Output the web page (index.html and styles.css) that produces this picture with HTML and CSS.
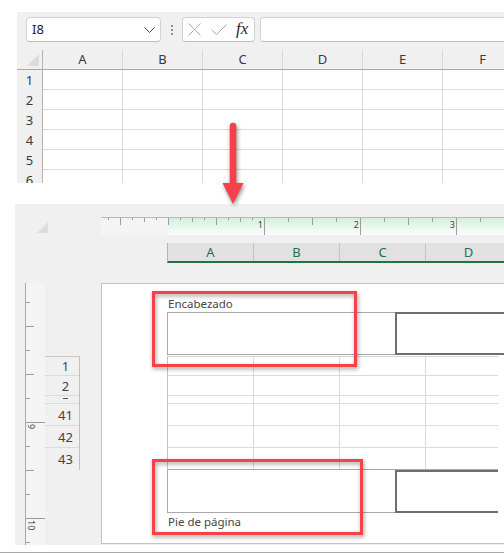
FILE: index.html
```html
<!DOCTYPE html>
<html>
<head>
<meta charset="utf-8">
<link rel="stylesheet" href="styles.css">
</head>
<body>
<div class="top">
  <div class="toolbar">
    <div class="namebox"><span class="nb-text">I8</span><svg class="chev" width="11" height="6" viewBox="0 0 11 6"><path d="M0.5 0.5 L5.5 5.5 L10.5 0.5" stroke="#444" stroke-width="1" fill="none"/></svg></div>
    <svg class="dots" width="2" height="10" viewBox="0 0 2 10"><rect x="0" y="0" width="2" height="2" fill="#8e8e8e"/><rect x="0" y="4" width="2" height="2" fill="#8e8e8e"/><rect x="0" y="8" width="2" height="2" fill="#8e8e8e"/></svg>
    <div class="fxbtns">
      <svg class="ico-x" width="13" height="13" viewBox="0 0 13 13"><path d="M0.5 0.5 L12.5 12.5 M12.5 0.5 L0.5 12.5" stroke="#ababab" stroke-width="1" fill="none"/></svg>
      <svg class="ico-ok" width="16" height="11" viewBox="0 0 16 11"><path d="M0.5 5.5 L5.5 10.5 L15.5 0.5" stroke="#ababab" stroke-width="1" fill="none"/></svg>
      <span class="fx">fx</span>
    </div>
    <div class="formula"></div>
  </div>
  <div class="sheet">
    <div class="srow shead">
      <div class="corner"><div class="tri"></div></div>
      <div class="ch">A</div><div class="ch">B</div><div class="ch">C</div><div class="ch">D</div><div class="ch">E</div><div class="ch">F</div>
    </div>
    <div class="srow"><div class="rh">1</div><div class="c"></div><div class="c"></div><div class="c"></div><div class="c"></div><div class="c"></div><div class="c"></div></div>
    <div class="srow"><div class="rh">2</div><div class="c"></div><div class="c"></div><div class="c"></div><div class="c"></div><div class="c"></div><div class="c"></div></div>
    <div class="srow"><div class="rh">3</div><div class="c"></div><div class="c"></div><div class="c"></div><div class="c"></div><div class="c"></div><div class="c"></div></div>
    <div class="srow"><div class="rh">4</div><div class="c"></div><div class="c"></div><div class="c"></div><div class="c"></div><div class="c"></div><div class="c"></div></div>
    <div class="srow"><div class="rh">5</div><div class="c"></div><div class="c"></div><div class="c"></div><div class="c"></div><div class="c"></div><div class="c"></div></div>
    <div class="srow"><div class="rh">6</div><div class="c"></div><div class="c"></div><div class="c"></div><div class="c"></div><div class="c"></div><div class="c"></div></div>
  </div>
</div>

<div class="bottom">
  <div class="ruler-row">
    <div class="tri2"></div>
    <div class="hruler">
      <div class="hneg"></div>
      <div class="inch fine"><span class="rl">1</span></div>
      <div class="inch"><span class="rl">2</span></div>
      <div class="inch"><span class="rl">3</span></div>
      <div class="inch"></div>
    </div>
  </div>
  <div class="colhdr">
    <div class="pch">A</div><div class="pch">B</div><div class="pch">C</div><div class="pch">D</div>
  </div>
  <div class="main">
    <div class="vruler">
      <div class="vseg"></div>
      <div class="vmajor"><span class="vl">9</span></div>
      <div class="vmajor"><span class="vl">10</span></div>
    </div>
    <div class="rowhdrs">
      <div class="prh r19">1</div>
      <div class="prh r20">2</div>
      <div class="prh r8"><span class="dash"></span></div>
      <div class="prh r22">41</div>
      <div class="prh r22">42</div>
      <div class="prh r22 last">43</div>
    </div>
    <div class="page">
      <div class="hf-label top-label">Encabezado</div>
      <div class="hf-row">
        <div class="hf-left"></div>
        <div class="hf-center"></div>
      </div>
      <div class="pgrid">
        <div class="prow r19"><div class="pc"></div><div class="pc"></div><div class="pc"></div><div class="pc lastc"></div></div>
        <div class="prow r20"><div class="pc"></div><div class="pc"></div><div class="pc"></div><div class="pc lastc"></div></div>
        <div class="prow r8"><div class="pc"></div><div class="pc"></div><div class="pc"></div><div class="pc lastc"></div></div>
        <div class="prow r22"><div class="pc"></div><div class="pc"></div><div class="pc"></div><div class="pc lastc"></div></div>
        <div class="prow r22"><div class="pc"></div><div class="pc"></div><div class="pc"></div><div class="pc lastc"></div></div>
        <div class="prow r22"><div class="pc"></div><div class="pc"></div><div class="pc"></div><div class="pc lastc"></div></div>
      </div>
      <div class="hf-row foot">
        <div class="hf-left"></div>
        <div class="hf-center"></div>
      </div>
      <div class="hf-label foot-label">Pie de página</div>
    </div>
  </div>
</div>
<div class="baseline"></div>

<svg class="arrow" width="30" height="92" viewBox="0 0 30 92">
  <line x1="15" y1="8" x2="15" y2="68" stroke="#f4414a" stroke-width="6.5" stroke-linecap="round"/>
  <polygon points="4.5,65 25.5,65 15,86" fill="#f4414a"/>
</svg>
<div class="hl hl1"></div>
<div class="hl hl2"></div>
</body>
</html>
```

FILE: styles.css
```css
html, body {
  margin: 0;
  padding: 0;
}
body {
  width: 504px;
  height: 553px;
  overflow: hidden;
  position: relative;
  background: #ffffff;
  font-family: "Noto Sans", "Open Sans", sans-serif;
  color: #333;
}

/* ---------- top: normal view ---------- */
.top {
  margin: 12px 0 0 17px;
  height: 171px;
  background: #f0f0f0;
  overflow: hidden;
}
.toolbar {
  display: flex;
  align-items: center;
  height: 25px;
  margin-top: 5px;
  padding-left: 9px;
}
.namebox, .fxbtns, .formula {
  box-sizing: border-box;
  height: 25px;
  background: #fff;
  border: 1px solid #d2d2d2;
  border-bottom-color: #bdbdbd;
  border-radius: 4px;
}
.namebox {
  width: 135px;
  flex: none;
  display: flex;
  align-items: center;
  justify-content: space-between;
  padding: 0 5px 0 5px;
}
.nb-text {
  font-size: 13px;
  color: #222;
  line-height: 1;
}
.chev { margin-top: 1px; }
.dots {
  flex: none;
  margin-left: 10px;
  margin-right: 9px;
}
.fxbtns {
  width: 73px;
  flex: none;
  display: flex;
  align-items: center;
  padding-left: 5px;
}
.ico-x { margin-right: 10px; }
.ico-ok { margin-right: 9px; }
.fx {
  font-family: "Liberation Serif", "DejaVu Serif", serif;
  font-style: italic;
  font-size: 17px;
  line-height: 1;
  color: #2b2b2b;
  margin-top: -3px;
}
.formula {
  margin-left: 5px;
  flex: 1;
  margin-right: -8px;
}

.sheet {
  margin-top: 8px;
}
.srow {
  display: flex;
  height: 20px;
}
.shead {
  border-bottom: 1px solid #a8a8a8;
  height: 19px;
}
.corner {
  box-sizing: border-box;
  width: 26px;
  flex: none;
  border-right: 1px solid #b4b4b4;
  display: flex;
  align-items: flex-end;
  justify-content: flex-end;
  padding: 0 3px 3px 0;
}
.tri {
  width: 12px;
  height: 12px;
  background: #dcdcdc;
  clip-path: polygon(100% 0, 100% 100%, 0 100%);
}
.ch {
  box-sizing: border-box;
  width: 80px;
  flex: none;
  border-right: 1px solid #d8d8d8;
  text-align: center;
  font-size: 13px;
  line-height: 19px;
  color: #3a3a3a;
}
.rh {
  box-sizing: border-box;
  width: 26px;
  flex: none;
  border-right: 1px solid #b4b4b4;
  text-align: center;
  font-size: 13px;
  line-height: 20px;
  color: #3a3a3a;
}
.c {
  box-sizing: border-box;
  width: 80px;
  flex: none;
  background: #fff;
  border-right: 1px solid #dadada;
  border-bottom: 1px solid #dadada;
}

/* ---------- bottom: page layout view ---------- */
.bottom {
  margin: 21px 0 0 15px;
  height: 341px;
  background: #f0f0f0;
  display: flex;
  flex-direction: column;
  overflow: hidden;
}
.ruler-row {
  display: flex;
  padding-top: 13px;
  height: 18px;
}
.tri2 {
  width: 11px;
  height: 11px;
  margin: 5px 0 0 22px;
  background: #dddddd;
  clip-path: polygon(100% 0, 100% 100%, 0 100%);
  flex: none;
}
.hruler {
  margin-left: 53px;
  display: flex;
  height: 18px;
  box-sizing: border-box;
  border-top: 1px solid #b8b8b8;
  flex: none;
}
.hneg {
  width: 68px;
  flex: none;
  background:
    linear-gradient(to right, #9c9c9c 1px, transparent 1px) 19px 0 / 48px 7px repeat-x,
    linear-gradient(to right, #9c9c9c 1px, transparent 1px) 19px 0 / 24px 4px repeat-x,
    linear-gradient(to right, #9c9c9c 1px, transparent 1px) 7px 0 / 12px 2px repeat-x,
    #f4f4f4;
}
.inch {
  box-sizing: border-box;
  width: 96px;
  flex: none;
  border-right: 1px solid #9c9c9c;
  display: flex;
  justify-content: flex-end;
  align-items: flex-start;
  padding: 2px 1px 0 0;
  background:
    linear-gradient(to right, #9c9c9c 1px, transparent 1px) 47px 0 / 48px 7px repeat-x,
    linear-gradient(to right, #9c9c9c 1px, transparent 1px) 23px 0 / 24px 4px repeat-x,
    linear-gradient(#d5eedd, #fbfefc);
}
.inch.fine {
  background:
    linear-gradient(to right, #9c9c9c 1px, transparent 1px) 47px 0 / 48px 7px repeat-x,
    linear-gradient(to right, #9c9c9c 1px, transparent 1px) 23px 0 / 24px 4px repeat-x,
    linear-gradient(to right, #9c9c9c 1px, transparent 1px) 11px 0 / 12px 2px repeat-x,
    linear-gradient(#d5eedd, #fbfefc);
}
.rl {
  font-size: 9px;
  line-height: 9px;
  color: #444;
}

.colhdr {
  display: flex;
  margin: 8px 0 0 152px;
  height: 20px;
  box-sizing: border-box;
  border-left: 1px solid #b4b4b4;
  border-bottom: 2px solid #217346;
}
.pch {
  box-sizing: border-box;
  width: 86px;
  flex: none;
  background: #e1e1e1;
  border-right: 1px solid #c4c4c4;
  text-align: center;
  font-size: 13px;
  line-height: 18px;
  color: #26704c;
}

.main {
  display: flex;
  margin-top: 20px;
  height: 262px;
  flex: none;
}
.vruler {
  box-sizing: border-box;
  width: 20px;
  margin-left: 10px;
  border-left: 1px solid #a8a8a8;
  display: flex;
  flex-direction: column;
  flex: none;
  background: #f4f4f4;
}
.vseg {
  height: 139px;
  flex: none;
  background:
    linear-gradient(#9c9c9c 1px, transparent 1px) 0 43px / 8px 48px repeat-y,
    linear-gradient(#9c9c9c 1px, transparent 1px) 0 19px / 4px 24px repeat-y;
}
.vmajor {
  height: 96px;
  flex: none;
  box-sizing: border-box;
  border-top: 1px solid #9c9c9c;
  background:
    linear-gradient(#9c9c9c 1px, transparent 1px) 0 47px / 8px 48px repeat-y,
    linear-gradient(#9c9c9c 1px, transparent 1px) 0 23px / 4px 24px repeat-y;
}
.vl {
  display: block;
  writing-mode: vertical-rl;
  font-size: 9px;
  line-height: 9px;
  color: #444;
  margin: 1px 0 0 1px;
  width: 9px;
}

.rowhdrs {
  box-sizing: border-box;
  width: 35px;
  flex: none;
  align-self: flex-start;
  margin-top: 73px;
  border-top: 1px solid #c8c8c8;
  border-right: 1px solid #c0c0c0;
}
.prh {
  box-sizing: border-box;
  border-bottom: 1px solid #dadada;
  text-align: center;
  font-size: 13px;
  color: #444;
  padding-left: 7px;
  display: flex;
  align-items: center;
  justify-content: center;
}
.prh.last { border-bottom: none; }
.r19 { height: 19px; }
.r20 { height: 20px; }
.r8 { height: 8px; }
.r22 { height: 22px; }
.dash {
  width: 5px;
  height: 1px;
  background: #555;
  margin-bottom: 2px;
}

.page {
  box-sizing: border-box;
  flex: none;
  width: 420px;
  height: 261px;
  margin-left: 21px;
  background: #fff;
  border: 1px solid #c2c2c2;
  border-right: none;
}
.hf-label {
  font-size: 11.5px;
  line-height: 13px;
  color: #454545;
  margin-left: 66px;
}
.top-label { padding-top: 13px; }
.foot-label { margin-top: 2px; }
.hf-row {
  display: flex;
  margin: 2px 0 0 65px;
  height: 43px;
}
.hf-row.foot {
  margin-top: 0;
}
.hf-left {
  box-sizing: border-box;
  width: 228px;
  flex: none;
  border: 1px solid #a9a9a9;
  border-right: none;
}
.foot .hf-left { border-top: none; }
.hf-center {
  box-sizing: border-box;
  width: 140px;
  flex: none;
  border: 2px solid #6e6e6e;
}
.foot .hf-center { width: 103px; border-right: none; }
.pgrid {
  margin: 1px 0 0 65px;
  width: 331px;
  box-sizing: border-box;
  border-top: 1px solid #d6d6d6;
  border-left: 1px solid #c4c4c4;
}
.prow {
  display: flex;
  box-sizing: border-box;
  border-bottom: 1px solid #dadada;
}
.prow:last-child { border-bottom-color: #a9a9a9; }
.pc {
  box-sizing: border-box;
  width: 86px;
  flex: none;
  border-right: 1px solid #dadada;
}
.pc.lastc {
  width: 72px;
  border-right: none;
}

.baseline {
  margin-top: 7px;
  height: 1px;
  background: #a8a8a8;
}

/* ---------- overlays ---------- */
.arrow {
  position: absolute;
  left: 218px;
  top: 118px;
  filter: drop-shadow(1px 2px 2px rgba(0, 0, 0, 0.45));
}
.hl {
  position: absolute;
  box-sizing: border-box;
  border: 3.5px solid #f4414a;
  filter: drop-shadow(1px 2px 2px rgba(0, 0, 0, 0.4));
}
.hl1 {
  left: 152px;
  top: 291px;
  width: 205px;
  height: 76px;
}
.hl2 {
  left: 152px;
  top: 459px;
  width: 211px;
  height: 76px;
}
```
